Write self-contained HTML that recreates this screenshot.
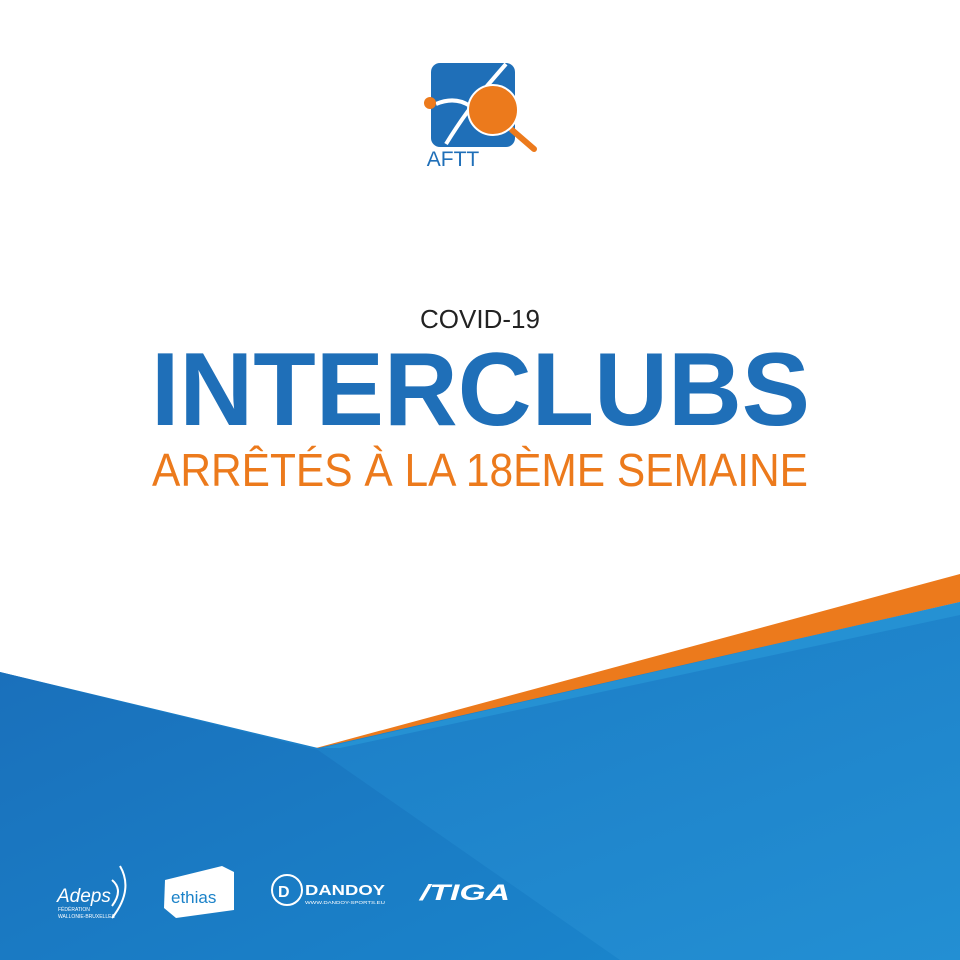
<!DOCTYPE html>
<html><head><meta charset="utf-8"><style>
html,body{margin:0;padding:0;background:#fff}
svg{display:block}
</style></head><body>
<svg width="960" height="960" viewBox="0 0 960 960" xmlns="http://www.w3.org/2000/svg">
<defs>
<linearGradient id="bg" x1="0" y1="0" x2="1" y2="1">
<stop offset="0" stop-color="#1a70bb"/><stop offset="1" stop-color="#1a84cb"/>
</linearGradient>
<linearGradient id="bg2" x1="0" y1="0" x2="1" y2="1">
<stop offset="0" stop-color="#1a78c2"/><stop offset="1" stop-color="#238fd3"/>
</linearGradient>
</defs>
<rect width="960" height="960" fill="#fff"/>
<polygon points="960,574 960,602 322,748 316,748" fill="#ec7a1c"/>
<polygon points="960,602 960,960 0,960 0,672 318,748" fill="url(#bg2)"/>
<polygon points="960,602 960,615 340,748 322,748" fill="#2591d3"/>
<polygon points="0,672 318,750 620,960 0,960" fill="url(#bg)"/>

<!-- logo -->
<rect x="431" y="63" width="84" height="84" rx="9" fill="#1f6fb8"/>
<path d="M436 104 Q455 96 470 106 Q492 80 506 64" stroke="#fff" stroke-width="4" fill="none"/>
<path d="M446 144 Q462 118 478 98" stroke="#fff" stroke-width="4" fill="none"/>
<circle cx="430" cy="103" r="6" fill="#ec7a1c"/>
<line x1="512" y1="130" x2="534" y2="149" stroke="#ec7a1c" stroke-width="6" stroke-linecap="round"/>
<circle cx="493" cy="110" r="25" fill="#ec7a1c" stroke="#fff" stroke-width="2"/>
<text x="453" y="166" text-anchor="middle" font-family="Liberation Sans, sans-serif" font-size="21" fill="#1f6fb8">AFTT</text>

<text x="480" y="328" text-anchor="middle" font-family="Liberation Sans, sans-serif" font-size="26" fill="#222">COVID-19</text>
<text x="151" y="425" textLength="659" lengthAdjust="spacingAndGlyphs" font-family="Liberation Sans, sans-serif" font-weight="bold" font-size="104" fill="#1f6fb8">INTERCLUBS</text>
<text x="152" y="486" textLength="656" lengthAdjust="spacingAndGlyphs" font-family="Liberation Sans, sans-serif" font-size="46" fill="#ec7a1c">ARRÊTÉS À LA 18ÈME SEMAINE</text>

<g fill="#fff" font-family="Liberation Sans, sans-serif">
<text x="57" y="902" font-size="19" font-style="italic">Adeps</text>
<text x="58" y="911" font-size="5">FÉDÉRATION</text>
<text x="58" y="918" font-size="5">WALLONIE-BRUXELLES</text>
<path d="M120 866 Q134 890 112 918" stroke="#fff" stroke-width="2" fill="none"/>
<path d="M112 880 Q124 890 112 906" stroke="#fff" stroke-width="2" fill="none"/>
<polygon points="165,880 222,866 234,872 234,910 176,918 164,908"/>
<text x="171" y="903" font-size="17" fill="#1b82c8">ethias</text>
<circle cx="287" cy="890" r="15" fill="none" stroke="#fff" stroke-width="2"/>
<text x="278" y="897" font-size="16" font-weight="bold">D</text>
<text x="305" y="895" font-size="15" font-weight="bold" textLength="80" lengthAdjust="spacingAndGlyphs">DANDOY</text>
<text x="305" y="904" font-size="4.5" textLength="80" lengthAdjust="spacingAndGlyphs">WWW.DANDOY-SPORTS.EU</text>
<text x="420" y="900" font-size="22" font-weight="bold" font-style="italic" textLength="90" lengthAdjust="spacingAndGlyphs">/TIGA</text>
</g>
</svg>
</body></html>
